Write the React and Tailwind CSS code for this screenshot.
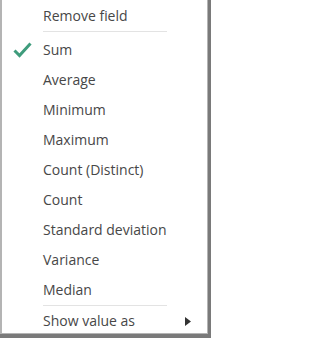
const ITEMS = ['Sum', 'Average', 'Minimum', 'Maximum', 'Count (Distinct)', 'Count', 'Standard deviation', 'Variance', 'Median']

export default function App() {
  return (
    <div className="w-[211px] h-[338px] bg-[#7a7a7a] overflow-hidden" style={{ fontFamily: '"Open Sans", "Noto Sans", sans-serif' }}>
      <div className="w-[208px] h-[334px] bg-white border-l-2 border-r border-b border-[#b4b4b4] pt-[1px] overflow-hidden">
        <Row label="Remove field" />
        <Sep className="mb-[3px]" />
        {ITEMS.map((label) => (
          <Row key={label} label={label} checked={label === 'Sum'} />
        ))}
        <Sep />
        <Row label="Show value as" submenu />
      </div>
    </div>
  )
}

function Row({ label, checked, submenu }) {
  return (
    <div className="h-[30px] flex items-center">
      <span className="w-[41px] flex items-center pl-[11px]">
        {checked && (
          <svg width="19" height="16" viewBox="0 0 19 16">
            <polyline points="1.5,8.5 6.5,13.5 17.5,1.5" fill="none" stroke="#3f9c7c" strokeWidth="3" />
          </svg>
        )}
      </span>
      <span className="flex-1 text-[14px] text-[#474747] leading-none">{label}</span>
      {submenu && (
        <svg className="mr-[16px]" width="6" height="9" viewBox="0 0 6 9">
          <polygon points="0,0 6,4.5 0,9" fill="#333" />
        </svg>
      )}
    </div>
  )
}

function Sep({ className = '' }) {
  return <div className={'ml-[41px] w-[124px] h-px bg-[#e3e3e3] ' + className} />
}
